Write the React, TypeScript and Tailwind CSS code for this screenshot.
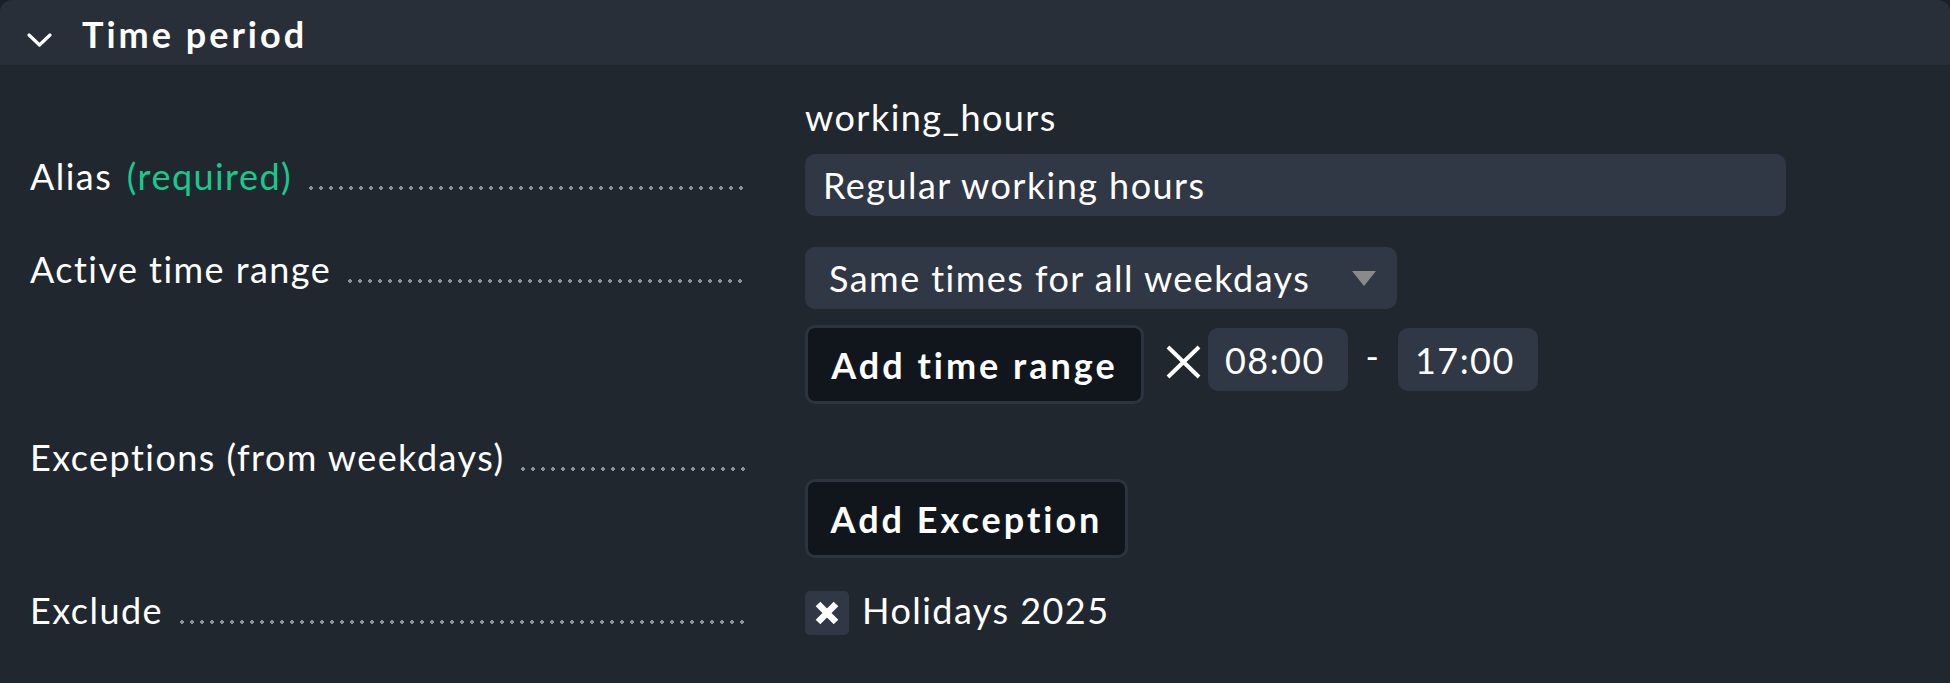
import React from "react";

function Dots() {
  return (
    <div className="ml-[14px] mt-[32px] h-[4px] flex-1 bg-[radial-gradient(circle,#8e9196_1.6px,transparent_2.1px)] bg-[length:10px_4px] bg-repeat-x" />
  );
}

function Label({ children }: { children: React.ReactNode }) {
  return (
    <div className="flex w-[805px] shrink-0 pl-[30px] pr-[60px]">
      <span className="whitespace-nowrap leading-[44px]">{children}</span>
      <Dots />
    </div>
  );
}

function Field({ children, className = "" }: { children: React.ReactNode; className?: string }) {
  return (
    <div className={`flex h-[62px] items-center rounded-[10px] bg-[#2f3844] leading-[44px] ${className}`}>
      {children}
    </div>
  );
}

function DarkButton({ children, width }: { children: React.ReactNode; width: string }) {
  return (
    <button
      type="button"
      className={`flex h-[79px] items-center justify-center rounded-[10px] border-[3px] border-[#2c3440] bg-[#11161c] text-[36px] font-bold tracking-[3px] text-white ${width}`}
    >
      {children}
    </button>
  );
}

export default function App() {
  return (
    <div className="min-h-screen bg-[#1b2027] font-['Lato',sans-serif] text-[36px] tracking-[1.45px] text-white">
      <div className="h-[683px] overflow-hidden rounded-t-[12px] bg-[#21272f]">
        {/* header */}
        <div className="flex h-[65px] items-center bg-[#282f39]">
          <svg className="ml-[27px] mt-[14px] h-[14px] w-[25px]" viewBox="0 0 25 14" fill="none">
            <path d="M2 2l10.5 10L23 2" stroke="white" strokeWidth="3.2" strokeLinecap="round" strokeLinejoin="round" />
          </svg>
          <h2 className="ml-[30px] mt-[3px] text-[36px] font-bold leading-[44px] tracking-[3px]">Time period</h2>
        </div>

        <div className="pt-[30px]">
          {/* id */}
          <div className="flex">
            <div className="w-[805px] shrink-0" />
            <div className="leading-[44px]">working_hours</div>
          </div>

          {/* alias */}
          <div className="mt-[15px] flex">
            <Label>
              Alias <span className="ml-[4px] text-[#17c98c]">(required)</span>
            </Label>
            <Field className="w-[981px] pl-[18px]">Regular working hours</Field>
          </div>

          {/* active time range */}
          <div className="mt-[31px] flex">
            <Label>Active time range</Label>
            <div className="flex flex-col">
              <Field className="w-[592px] justify-between pl-[24px] pr-[21px]">
                <span>Same times for all weekdays</span>
                <svg className="h-[15px] w-[24px]" viewBox="0 0 24 15">
                  <path d="M0 0h24L12 15z" fill="#8a8a8a" />
                </svg>
              </Field>
              <div className="mt-[16px] flex items-start">
                <DarkButton width="w-[339px]">Add time range</DarkButton>
                <svg className="ml-[21px] mt-[20px] h-[34px] w-[37px]" viewBox="0 0 37 34" fill="none">
                  <path d="M3 2l31 30M34 2L3 32" stroke="white" strokeWidth="4" />
                </svg>
                <Field className="ml-[6px] mt-[3px] h-[63px] w-[140px] pl-[17px]">08:00</Field>
                <span className="mt-[3px] w-[50px] text-center leading-[56px]">-</span>
                <Field className="mt-[3px] h-[63px] w-[140px] pl-[17px]">17:00</Field>
              </div>
            </div>
          </div>

          {/* exceptions */}
          <div className="mt-[31px] flex">
            <Label>Exceptions (from weekdays)</Label>
            <div className="pt-[44px]">
              <DarkButton width="w-[323px]">Add Exception</DarkButton>
            </div>
          </div>

          {/* exclude */}
          <div className="mt-[30px] flex">
            <Label>Exclude</Label>
            <div className="flex items-start">
              <div className="mt-[3px] flex h-[44px] w-[44px] items-center justify-center rounded-[5px] bg-[#2f3844]">
                <svg className="h-[24px] w-[24px]" viewBox="0 0 24 24" fill="none">
                  <path d="M3 3l18 18M21 3L3 21" stroke="white" strokeWidth="6.5" />
                </svg>
              </div>
              <span className="ml-[13px] leading-[44px]">Holidays 2025</span>
            </div>
          </div>
        </div>
      </div>
    </div>
  );
}
